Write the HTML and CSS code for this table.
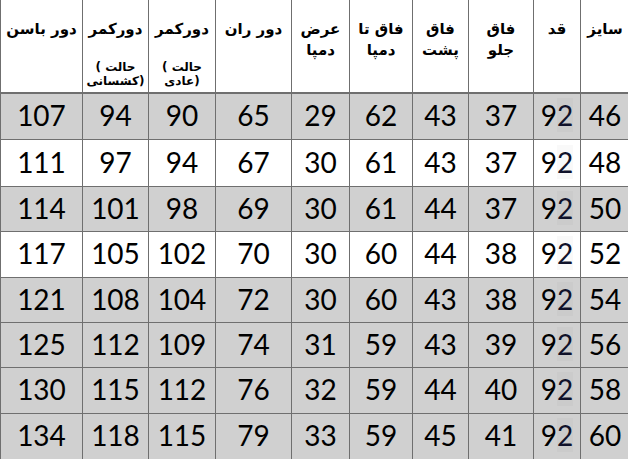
FILE: index.html
```html
<!DOCTYPE html>
<html lang="fa">
<head>
<meta charset="utf-8">
<title>جدول سایز</title>
<link rel="stylesheet" href="styles.css">
</head>
<body>
<div class="wrap">
<table class="sizes" dir="rtl">
  <colgroup>
    <col class="w49"><col class="w47"><col class="w65"><col class="w56"><col class="w63">
    <col class="w58"><col class="w76"><col class="w67"><col class="w66"><col class="w82">
  </colgroup>
  <thead>
    <tr>
      <th>سایز</th>
      <th>قد</th>
      <th>فاق<br>جلو</th>
      <th>فاق<br>پشت</th>
      <th>فاق تا<br>دمپا</th>
      <th>عرض<br>دمپا</th>
      <th>دور ران</th>
      <th><div class="main">دورکمر</div><div class="sub" dir="rtl"><div>حالت )</div><div>(عادی</div></div></th>
      <th><div class="main">دورکمر</div><div class="sub" dir="rtl"><div>حالت )</div><div>(کشسانی</div></div></th>
      <th>دور باسن</th>
    </tr>
  </thead>
  <tbody>
    <tr class="g r46"><td>46</td><td>9<span class="hl">2</span></td><td>37</td><td>43</td><td>62</td><td>29</td><td>65</td><td>90</td><td>94</td><td>107</td></tr>
    <tr class="r47"><td>48</td><td>9<span class="hl">2</span></td><td>37</td><td>43</td><td>61</td><td>30</td><td>67</td><td>94</td><td>97</td><td>111</td></tr>
    <tr class="g r45"><td>50</td><td>9<span class="hl">2</span></td><td>37</td><td>44</td><td>61</td><td>30</td><td>69</td><td>98</td><td>101</td><td>114</td></tr>
    <tr class="r46"><td>52</td><td>9<span class="hl">2</span></td><td>38</td><td>44</td><td>60</td><td>30</td><td>70</td><td>102</td><td>105</td><td>117</td></tr>
    <tr class="g r45"><td>54</td><td>9<span class="hl">2</span></td><td>38</td><td>43</td><td>60</td><td>30</td><td>72</td><td>104</td><td>108</td><td>121</td></tr>
    <tr class="g r45"><td>56</td><td>9<span class="hl">2</span></td><td>39</td><td>43</td><td>59</td><td>31</td><td>74</td><td>109</td><td>112</td><td>125</td></tr>
    <tr class="g r46"><td>58</td><td>9<span class="hl">2</span></td><td>40</td><td>44</td><td>59</td><td>32</td><td>76</td><td>112</td><td>115</td><td>130</td></tr>
    <tr class="g r46"><td>60</td><td>9<span class="hl">2</span></td><td>41</td><td>45</td><td>59</td><td>33</td><td>79</td><td>115</td><td>118</td><td>134</td></tr>
  </tbody>
</table>
</div>
</body>
</html>
```

FILE: styles.css
```css
html, body {
  margin: 0;
  padding: 0;
  background: #ffffff;
}
.wrap {
  width: 628px;
  height: 459px;
  overflow: hidden;
  direction: ltr;
}
.sizes {
  direction: rtl;
  border-collapse: collapse;
  table-layout: fixed;
  width: 630px;
  margin-right: -2px;
}
.w49 { width: 49px; }
.w47 { width: 47px; }
.w65 { width: 65px; }
.w56 { width: 56px; }
.w63 { width: 63px; }
.w58 { width: 58px; }
.w76 { width: 76px; }
.w67 { width: 67px; }
.w66 { width: 66px; }
.w82 { width: 82px; }

.sizes th, .sizes td {
  direction: rtl;
  border: 1px solid #6f6f6f;
  padding: 0;
  text-align: center;
}
.sizes thead th {
  border-top: none;
  border-bottom: 2px solid #6f6f6f;
  height: 93px;
  vertical-align: top;
  padding-top: 19px;
  box-sizing: border-box;
  font-family: "DejaVu Sans", sans-serif;
  font-weight: bold;
  font-size: 15px;
  line-height: 21px;
  color: #000;
}
.sizes .main {
  line-height: 21px;
}
.sizes .sub {
  direction: rtl;
  margin-top: 20px;
  font-size: 12px;
  line-height: 14px;
}
.sizes td {
  box-sizing: border-box;
  font-family: Lato, "Open Sans", sans-serif;
  font-size: 28px;
  color: #000;
  vertical-align: middle;
  line-height: 30px;
  padding-bottom: 2px;
}
.sizes tr.r45 td { height: 45px; }
.sizes tr.r46 td { height: 46px; }
.sizes tr.r47 td { height: 47px; }
.sizes tr.g td {
  background: #d0d0d0;
}
.hl {
  background: rgba(0, 0, 0, 0.025);
  color: #10122a;
}
```
